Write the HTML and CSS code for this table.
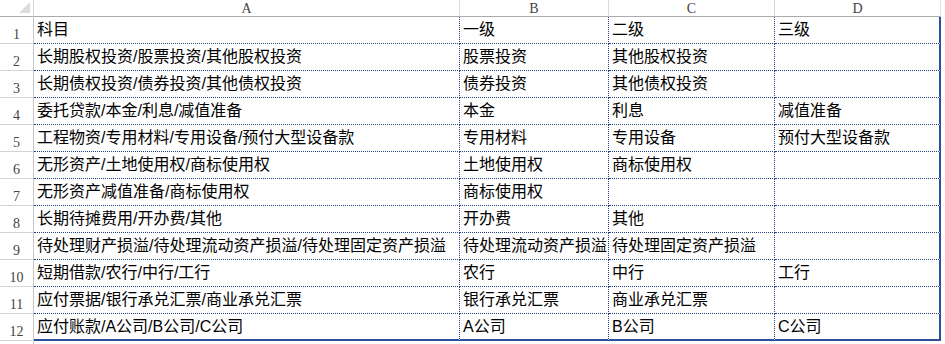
FILE: index.html
```html
<!DOCTYPE html>
<html lang="zh-CN">
<head>
<meta charset="utf-8">
<title>Sheet</title>
<link rel="stylesheet" href="styles.css">
</head>
<body>
<div class="sheet">
  <div class="corner"><svg class="tri" width="11" height="11" viewBox="0 0 11 11"><polygon points="11,0 11,11 0,11" fill="#dcdcdc"/></svg></div>
  <div class="ch">A</div><div class="ch">B</div><div class="ch">C</div><div class="ch ch-last">D</div>

  <div class="rh">1</div><div class="c">科目</div><div class="c">一级</div><div class="c">二级</div><div class="c d">三级</div>
  <div class="rh">2</div><div class="c">长期股权投资/股票投资/其他股权投资</div><div class="c">股票投资</div><div class="c">其他股权投资</div><div class="c d"></div>
  <div class="rh">3</div><div class="c">长期债权投资/债券投资/其他债权投资</div><div class="c">债券投资</div><div class="c">其他债权投资</div><div class="c d"></div>
  <div class="rh">4</div><div class="c">委托贷款/本金/利息/减值准备</div><div class="c">本金</div><div class="c">利息</div><div class="c d">减值准备</div>
  <div class="rh">5</div><div class="c">工程物资/专用材料/专用设备/预付大型设备款</div><div class="c">专用材料</div><div class="c">专用设备</div><div class="c d">预付大型设备款</div>
  <div class="rh">6</div><div class="c">无形资产/土地使用权/商标使用权</div><div class="c">土地使用权</div><div class="c">商标使用权</div><div class="c d"></div>
  <div class="rh">7</div><div class="c">无形资产减值准备/商标使用权</div><div class="c">商标使用权</div><div class="c"></div><div class="c d"></div>
  <div class="rh">8</div><div class="c">长期待摊费用/开办费/其他</div><div class="c">开办费</div><div class="c">其他</div><div class="c d"></div>
  <div class="rh">9</div><div class="c">待处理财产损溢/待处理流动资产损溢/待处理固定资产损溢</div><div class="c">待处理流动资产损溢</div><div class="c">待处理固定资产损溢</div><div class="c d"></div>
  <div class="rh">10</div><div class="c">短期借款/农行/中行/工行</div><div class="c">农行</div><div class="c">中行</div><div class="c d">工行</div>
  <div class="rh">11</div><div class="c">应付票据/银行承兑汇票/商业承兑汇票</div><div class="c">银行承兑汇票</div><div class="c">商业承兑汇票</div><div class="c d"></div>
  <div class="rh">12</div><div class="c last">应付账款/A公司/B公司/C公司</div><div class="c last">A公司</div><div class="c last">B公司</div><div class="c d last">C公司</div>
  <div class="rh rh-tail"></div>
</div>
</body>
</html>
```

FILE: styles.css
```css
html, body {
  margin: 0;
  padding: 0;
  background: #ffffff;
}

.sheet {
  display: grid;
  grid-template-columns: 34px 426px 149px 166px 166px;
  grid-template-rows: 17px repeat(12, 27px) 3px;
  width: 941px;
}

.sheet > div {
  box-sizing: border-box;
  overflow: hidden;
  white-space: nowrap;
}

.corner {
  display: flex;
  justify-content: flex-end;
  align-items: flex-end;
  padding: 0 3px 3px 0;
  border-right: 1px solid #d6d6d6;
  border-bottom: 1px solid #ababab;
}

.tri {
  display: block;
}

.ch {
  display: flex;
  justify-content: center;
  align-items: center;
  padding-top: 2px;
  font-family: "Liberation Serif", serif;
  font-size: 14px;
  line-height: 14px;
  color: #444444;
  border-right: 1px solid #dadada;
  border-bottom: 1px solid #ababab;
}

.ch-last {
  border-right-color: #e2e2e2;
}

.rh {
  display: flex;
  justify-content: center;
  align-items: flex-end;
  font-family: "Liberation Serif", serif;
  font-size: 14px;
  line-height: 14px;
  color: #444444;
  border-right: 1px solid #c6c6c6;
  border-bottom: 1px solid #d4d4d4;
  padding-bottom: 1px;
}

.rh-tail {
  border-bottom: none;
}

.c {
  display: flex;
  align-items: center;
  padding-left: 3px;
  font-family: "Liberation Sans", "Noto Sans CJK SC", sans-serif;
  font-size: 16px;
  line-height: 20px;
  color: #000000;
  border-right: 1px dotted #243f86;
  border-bottom: 1px dotted #243f86;
}

.c.d {
  border-right: 2px solid #2b4f9c;
}

.c.last {
  border-bottom: 2px solid #2b4f9c;
}
```
